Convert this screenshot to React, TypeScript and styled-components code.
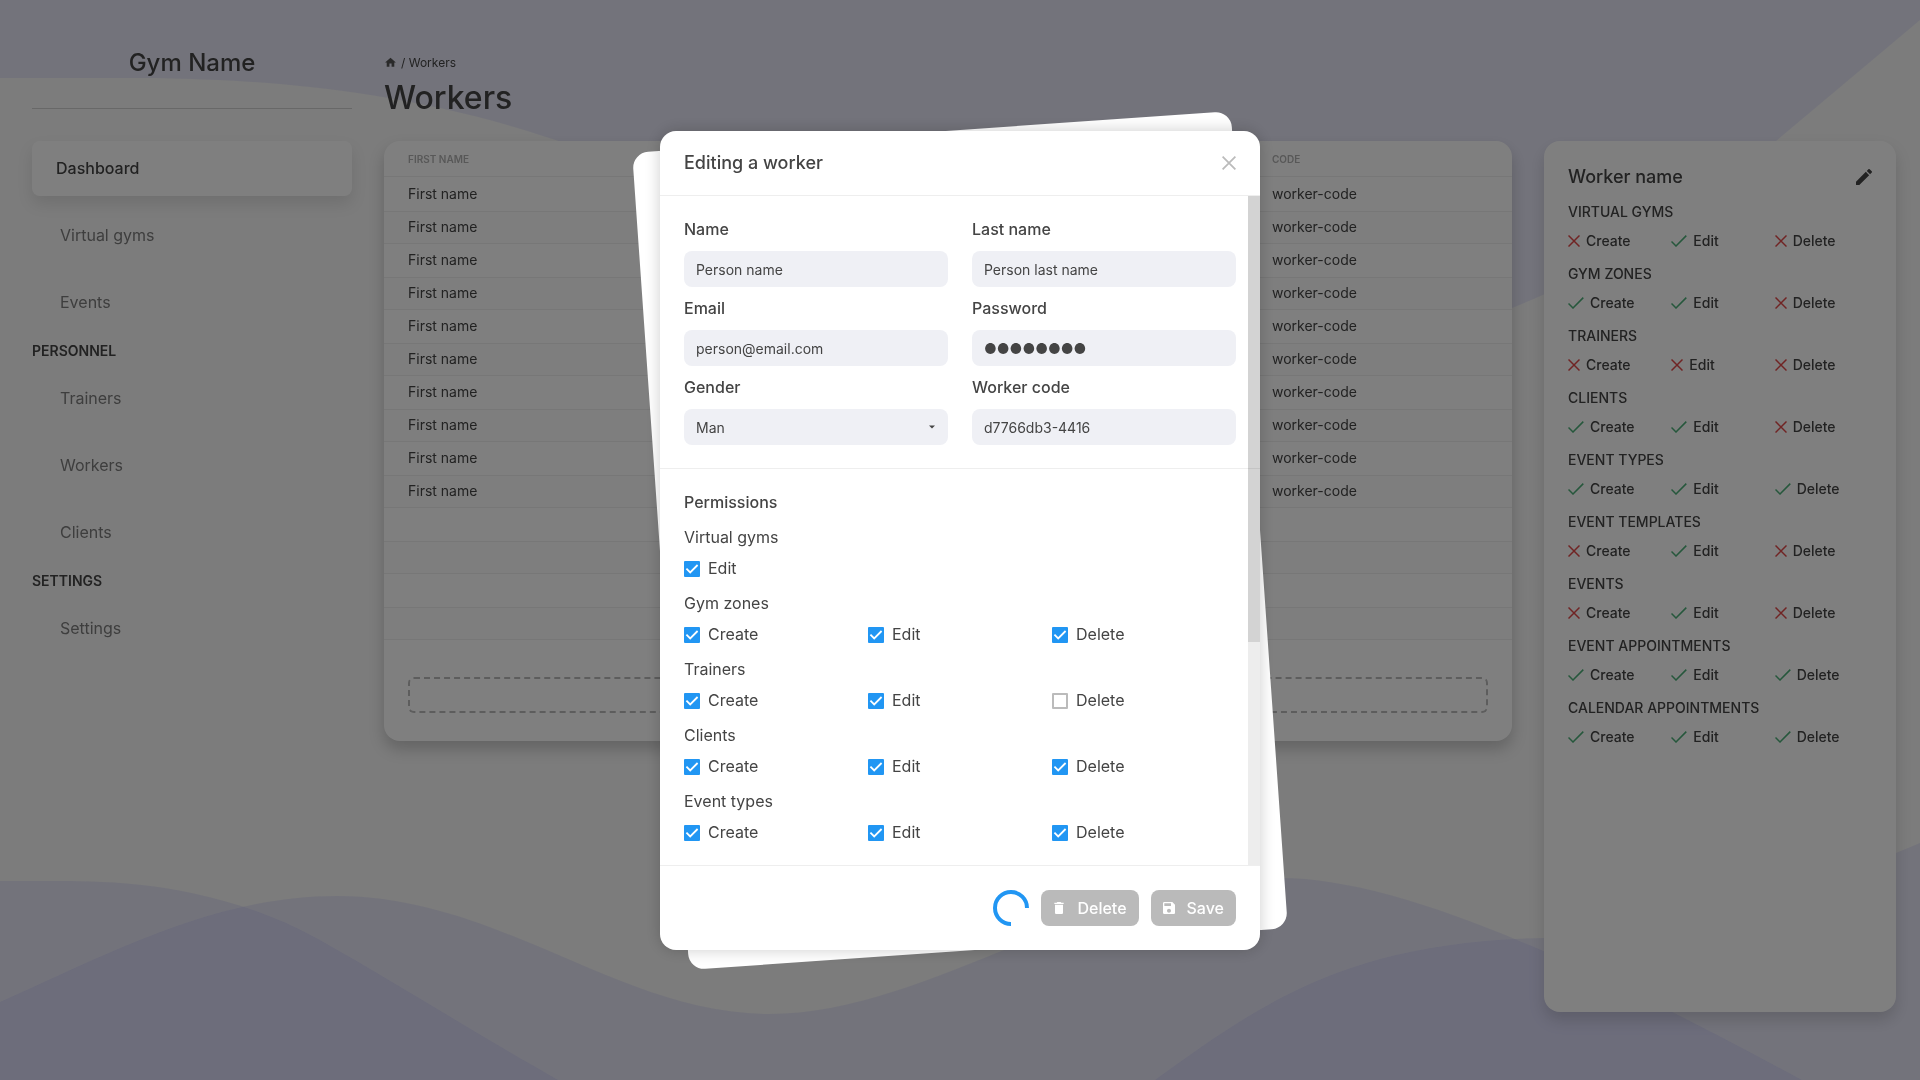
import React, { useId } from 'react';
import styled, { createGlobalStyle } from 'styled-components';
import { MdHome, MdDelete, MdSave } from 'react-icons/md';

const GlobalStyle = createGlobalStyle`
  *, *::before, *::after { box-sizing: border-box; }
  html, body { margin: 0; height: 100%; }
  #root { min-height: 100vh; }
  body {
    background: #f8f8f8;
    color: #444444;
    font-family: Inter, "Liberation Sans", sans-serif;
    font-size: 16px;
    line-height: 19px;
    overflow: hidden;
  }
  button, input, select { font: inherit; color: inherit; }
`;

const Waves = styled.svg`
  position: fixed;
  inset: 0;
  width: 100%;
  height: 100%;
  z-index: -1;
`;

const Page = styled.div`
  display: grid;
  grid-template-columns: 320px minmax(0, 1fr) 352px;
  column-gap: 32px;
  min-height: 100vh;
  padding: 40px 24px 0 32px;
`;

const Sidebar = styled.aside`
  display: flex;
  flex-direction: column;
`;

const Brand = styled.div`
  height: 69px;
  padding-top: 8px;
  margin-bottom: 32px;
  border-bottom: 1px solid #d0d0d0;
  font-size: 24px;
  line-height: 30px;
  font-weight: 500;
  text-align: center;
`;

const NavLink = styled.a<{ $active?: boolean }>`
  display: block;
  padding: ${p => (p.$active ? '18px 24px' : '18px 28px')};
  margin-bottom: 12px;
  border-radius: 8px;
  background: ${p => (p.$active ? '#ffffff' : 'transparent')};
  box-shadow: ${p => (p.$active ? '0 8px 16px rgba(0, 0, 0, 0.1)' : 'none')};
  color: ${p => (p.$active ? '#444444' : '#7c7c7c')};
  font-weight: ${p => (p.$active ? 500 : 400)};
  text-decoration: none;
`;

const NavHeading = styled.h2`
  margin: 0 0 12px;
  font-size: 14px;
  line-height: 17px;
  font-weight: 600;
`;

const Main = styled.main`
  min-width: 0;
`;

const Crumbs = styled.nav`
  display: flex;
  align-items: center;
  gap: 4px;
  padding-top: 14px;
  font-size: 12px;
  line-height: 17px;

  a { display: flex; color: #555555; }
`;

const PageTitle = styled.h1`
  margin: 7px 0 24px;
  font-size: 32px;
  line-height: 39px;
  font-weight: 500;
`;

const Card = styled.section`
  background: #ffffff;
  border-radius: 16px;
  box-shadow: 0 8px 16px rgba(0, 0, 0, 0.2);
`;

const TableCard = styled(Card)`
  padding-bottom: 28px;
`;

const Table = styled.table`
  width: 100%;
  border-spacing: 0;
  table-layout: fixed;
  font-size: 14px;
  line-height: 17px;
  text-align: left;

  th {
    height: 36px;
    padding: 2px 24px 0;
    border-bottom: 1px solid #eeeeee;
    color: #b0b0b0;
    font-size: 10px;
    font-weight: 600;
  }

  th:last-child { width: 264px; }

  td {
    height: 33px;
    padding: 0 24px 2px;
  }

  tbody tr:first-child td { height: 34px; }

  tbody tr:nth-child(even) td {
    background: #fcfcfc;
    border-top: 1px solid #eeeeee;
    border-bottom: 1px solid #eeeeee;
  }
`;

const AddRow = styled.button`
  display: block;
  width: calc(100% - 48px);
  height: 36px;
  margin: 37px 24px 0;
  border: 2px dashed #bbbbbb;
  border-radius: 6px;
  background: transparent;
`;

const Details = styled(Card)`
  height: calc(100vh - 209px);
  margin-top: 101px;
  padding: 24px;
  box-shadow: 0 8px 16px rgba(0, 0, 0, 0.15);
`;

const DetailsHeader = styled.header`
  display: flex;
  align-items: center;
  justify-content: space-between;
  margin-bottom: 14px;

  h2 {
    margin: 0;
    font-size: 18px;
    line-height: 24px;
    font-weight: 500;
  }
`;

const IconButton = styled.button`
  display: flex;
  padding: 0;
  border: 0;
  background: none;
`;

const Group = styled.section`
  margin-bottom: 16px;

  h3 {
    margin: 0 0 12px;
    font-size: 14px;
    line-height: 17px;
    font-weight: 500;
  }
`;

const Marks = styled.ul`
  display: grid;
  grid-template-columns: repeat(3, 1fr);
  column-gap: 6px;
  margin: 0;
  padding: 0;
  list-style: none;
`;

const Mark = styled.li`
  display: flex;
  align-items: center;
  gap: 6px;
  font-size: 14px;
  line-height: 17px;
  font-weight: 500;
`;

const Backdrop = styled.div`
  position: fixed;
  inset: 0;
  display: flex;
  justify-content: center;
  padding: 131px 0 130px;
  background: rgba(0, 0, 0, 0.5);
`;

const Dialog = styled.div`
  position: relative;
  display: flex;
  flex-direction: column;
  width: 600px;
  isolation: isolate;

  &::before {
    content: '';
    position: absolute;
    inset: 0;
    z-index: -2;
    border-radius: 16px;
    background: #ffffff;
    transform: rotate(-4deg);
  }

  &::after {
    content: '';
    position: absolute;
    inset: 0;
    z-index: -1;
    border-radius: 16px;
    background: #ffffff;
    box-shadow: 0 0 16px rgba(0, 0, 0, 0.2);
  }
`;

const DialogHeader = styled.header`
  display: flex;
  align-items: center;
  justify-content: space-between;
  flex: none;
  padding: 20px 24px;
  border-bottom: 1px solid #eeeeee;

  h2 {
    margin: 0;
    font-size: 18px;
    line-height: 24px;
    font-weight: 500;
  }
`;

const ScrollFrame = styled.div`
  position: relative;
  flex: 1;
  min-height: 0;
`;

const ScrollArea = styled.div`
  height: 100%;
  overflow: hidden;
`;

const ScrollTrack = styled.div`
  position: absolute;
  top: 0;
  right: 0;
  bottom: 0;
  width: 12px;
  background: rgba(0, 0, 0, 0.07);
`;

const ScrollThumb = styled.div`
  height: calc(100% * 2 / 3);
  background: rgba(0, 0, 0, 0.11);
`;

const Fields = styled.div`
  display: grid;
  grid-template-columns: 1fr 1fr;
  gap: 12px 24px;
  padding: 24px 24px 23px;
  border-bottom: 1px solid #eeeeee;
`;

const FieldBox = styled.div`
  display: flex;
  flex-direction: column;
  gap: 12px;

  label { font-weight: 500; }
`;

const Input = styled.input`
  width: 100%;
  height: 36px;
  padding: 1px 12px 0;
  border: 0;
  border-radius: 8px;
  background: #eff0f5;
  font-size: 14px;
`;

const SelectWrap = styled.div`
  position: relative;

  svg {
    position: absolute;
    top: 16px;
    right: 13px;
    pointer-events: none;
  }
`;

const Select = styled(Input).attrs({ as: 'select' })`
  appearance: none;
`;

const Permissions = styled.div`
  padding: 24px;
`;

const PermissionsTitle = styled.h3`
  margin: 0 0 16px;
  font-size: 16px;
  line-height: 19px;
  font-weight: 500;
`;

const PermissionSet = styled.fieldset`
  min-width: 0;
  margin: 0 0 16px;
  padding: 0;
  border: 0;

  legend {
    padding: 0;
    margin-bottom: 12px;
  }
`;

const Checks = styled.div`
  display: grid;
  grid-template-columns: repeat(3, 1fr);
`;

const CheckLabel = styled.label`
  display: flex;
  align-items: center;
  gap: 8px;
`;

const CheckBox = styled.span`
  display: grid;
  width: 16px;
  height: 16px;

  input {
    grid-area: 1 / 1;
    appearance: none;
    width: 16px;
    height: 16px;
    margin: 0;
    border: 2px solid #bbbbbb;
    border-radius: 1px;
    background: #ffffff;
  }

  input:checked {
    border: 0;
    background: #2196f3;
  }

  svg {
    grid-area: 1 / 1;
    visibility: hidden;
    pointer-events: none;
  }

  input:checked + svg { visibility: visible; }
`;

const DialogFooter = styled.footer`
  display: flex;
  align-items: center;
  justify-content: flex-end;
  flex: none;
  gap: 12px;
  padding: 24px;
  border-top: 1px solid #eeeeee;
`;

const ActionButton = styled.button`
  display: flex;
  align-items: center;
  gap: 10px;
  height: 36px;
  padding: 0 12px 0 10px;
  border: 0;
  border-radius: 8px;
  background: #bababa;
  color: #ffffff;
  font-weight: 500;
`;

const CrossIcon = ({ size = 12, color = '#e04848', weight = 1.5 }) => (
  <svg width={size} height={size} viewBox="0 0 12 12" fill="none" stroke={color} strokeWidth={weight}>
    <path d="M0.5 0.5 11.5 11.5M11.5 0.5 0.5 11.5" />
  </svg>
);

const TickIcon = () => (
  <svg width="16" height="12" viewBox="0 0 16 12" fill="none" stroke="#4caf78" strokeWidth="1.5">
    <path d="M0.5 6.5 5 11 15.3 0.6" />
  </svg>
);

const PencilIcon = () => (
  <svg width="16" height="16" viewBox="3 3 18 18" fill="currentColor">
    <path d="M3 17.25V21h3.75L17.81 9.94l-3.75-3.75L3 17.25zM20.71 7.04a.996.996 0 0 0 0-1.41l-2.34-2.34a.996.996 0 0 0-1.41 0l-1.83 1.83 3.75 3.75 1.83-1.83z" />
  </svg>
);

type Flags = [boolean, boolean, boolean];
const ACTIONS = ['Create', 'Edit', 'Delete'];

const WORKER_RIGHTS: [string, Flags][] = [
  ['VIRTUAL GYMS', [false, true, false]],
  ['GYM ZONES', [true, true, false]],
  ['TRAINERS', [false, false, false]],
  ['CLIENTS', [true, true, false]],
  ['EVENT TYPES', [true, true, true]],
  ['EVENT TEMPLATES', [false, true, false]],
  ['EVENTS', [false, true, false]],
  ['EVENT APPOINTMENTS', [true, true, true]],
  ['CALENDAR APPOINTMENTS', [true, true, true]],
];

const FORM_RIGHTS: { name: string; items: [string, boolean][] }[] = [
  { name: 'Virtual gyms', items: [['Edit', true]] },
  { name: 'Gym zones', items: [['Create', true], ['Edit', true], ['Delete', true]] },
  { name: 'Trainers', items: [['Create', true], ['Edit', true], ['Delete', false]] },
  { name: 'Clients', items: [['Create', true], ['Edit', true], ['Delete', true]] },
  { name: 'Event types', items: [['Create', true], ['Edit', true], ['Delete', true]] },
];

function Field({ label, type = 'text', value }: { label: string; type?: string; value: string }) {
  const id = useId();
  return (
    <FieldBox>
      <label htmlFor={id}>{label}</label>
      <Input id={id} type={type} defaultValue={value} />
    </FieldBox>
  );
}

function Background() {
  return (
    <Waves viewBox="0 0 1920 1080" preserveAspectRatio="none" fill="#a3a6f5" fillOpacity="0.2" aria-hidden="true">
      <path d="M0 0V78H107C213 78 427 78 640 173C853 268 1067 352 1280 352C1450 352 1600 290 1776 141L1920 20V0Z" />
      <path d="M0 881H53C107 881 213 881 320 940C400 985 470 1030 558 1080H0ZM1155 1080C1265 1000 1350 942 1544 938C1700 935 1780 915 1896 853L1920 843V1080Z" />
      <path d="M0 1002C107 955 213 896 337 896C500 896 620 1014 769 1014C930 1014 1090 878 1280 878C1400 878 1580 960 1802 1080H0Z" />
    </Waves>
  );
}

function EditDialog() {
  const genderId = useId();
  return (
    <Backdrop>
      <Dialog role="dialog" aria-modal="true" aria-labelledby="dialog-title">
        <DialogHeader>
          <h2 id="dialog-title">Editing a worker</h2>
          <IconButton type="button" aria-label="Close">
            <CrossIcon size={14} color="#bbbbbb" />
          </IconButton>
        </DialogHeader>
        <ScrollFrame>
          <ScrollArea>
            <Fields>
              <Field label="Name" value="Person name" />
              <Field label="Last name" value="Person last name" />
              <Field label="Email" type="email" value="person@email.com" />
              <Field label="Password" value="●●●●●●●●" />
              <FieldBox>
                <label htmlFor={genderId}>Gender</label>
                <SelectWrap>
                  <Select id={genderId}>
                    <option>Man</option>
                  </Select>
                  <svg width="6" height="4" viewBox="0 0 6 4" fill="#444444"><path d="M0 0.5H6L3 3.5Z" /></svg>
                </SelectWrap>
              </FieldBox>
              <Field label="Worker code" value="d7766db3-4416" />
            </Fields>
            <Permissions>
              <PermissionsTitle>Permissions</PermissionsTitle>
              {FORM_RIGHTS.map(set => (
                <PermissionSet key={set.name}>
                  <legend>{set.name}</legend>
                  <Checks>
                    {set.items.map(([action, on]) => (
                      <CheckLabel key={action}>
                        <CheckBox>
                          <input type="checkbox" defaultChecked={on} />
                          <svg width="16" height="16" viewBox="0 0 16 16" fill="none" stroke="#ffffff" strokeWidth="1.8">
                            <path d="M2.4 7.6 6.2 11.4 13.6 4" />
                          </svg>
                        </CheckBox>
                        {action}
                      </CheckLabel>
                    ))}
                  </Checks>
                </PermissionSet>
              ))}
            </Permissions>
          </ScrollArea>
          <ScrollTrack>
            <ScrollThumb />
          </ScrollTrack>
        </ScrollFrame>
        <DialogFooter>
          <svg width="36" height="36" viewBox="0 0 36 36" fill="none" stroke="#2196f3" strokeWidth="4" aria-label="Loading">
            <path d="M34 18A16 16 0 1 0 18 34" />
          </svg>
          <ActionButton type="button"><MdDelete size={16} />Delete</ActionButton>
          <ActionButton type="button"><MdSave size={16} />Save</ActionButton>
        </DialogFooter>
      </Dialog>
    </Backdrop>
  );
}

export default function App() {
  const rows = Array.from({ length: 14 }, (_, i) => i < 10);
  return (
    <>
      <GlobalStyle />
      <Background />
      <Page>
        <Sidebar>
          <Brand>Gym Name</Brand>
          <NavLink href="#dashboard" $active>Dashboard</NavLink>
          <NavLink href="#virtual-gyms">Virtual gyms</NavLink>
          <NavLink href="#events">Events</NavLink>
          <NavHeading>PERSONNEL</NavHeading>
          <NavLink href="#trainers">Trainers</NavLink>
          <NavLink href="#workers">Workers</NavLink>
          <NavLink href="#clients">Clients</NavLink>
          <NavHeading>SETTINGS</NavHeading>
          <NavLink href="#settings">Settings</NavLink>
        </Sidebar>
        <Main>
          <Crumbs>
            <a href="#home" aria-label="Home"><MdHome size={13} /></a>
            <span>/ Workers</span>
          </Crumbs>
          <PageTitle>Workers</PageTitle>
          <TableCard>
            <Table>
              <thead>
                <tr>
                  <th>FIRST NAME</th>
                  <th />
                  <th />
                  <th>CODE</th>
                </tr>
              </thead>
              <tbody>
                {rows.map((filled, i) => (
                  <tr key={i}>
                    <td>{filled && 'First name'}</td>
                    <td />
                    <td />
                    <td>{filled && 'worker-code'}</td>
                  </tr>
                ))}
              </tbody>
            </Table>
            <AddRow type="button" aria-label="Add worker" />
          </TableCard>
        </Main>
        <Details>
          <DetailsHeader>
            <h2>Worker name</h2>
            <IconButton type="button" aria-label="Edit worker"><PencilIcon /></IconButton>
          </DetailsHeader>
          {WORKER_RIGHTS.map(([name, flags]) => (
            <Group key={name}>
              <h3>{name}</h3>
              <Marks>
                {flags.map((on, i) => (
                  <Mark key={i}>
                    {on ? <TickIcon /> : <CrossIcon />}
                    {ACTIONS[i]}
                  </Mark>
                ))}
              </Marks>
            </Group>
          ))}
        </Details>
      </Page>
      <EditDialog />
    </>
  );
}
